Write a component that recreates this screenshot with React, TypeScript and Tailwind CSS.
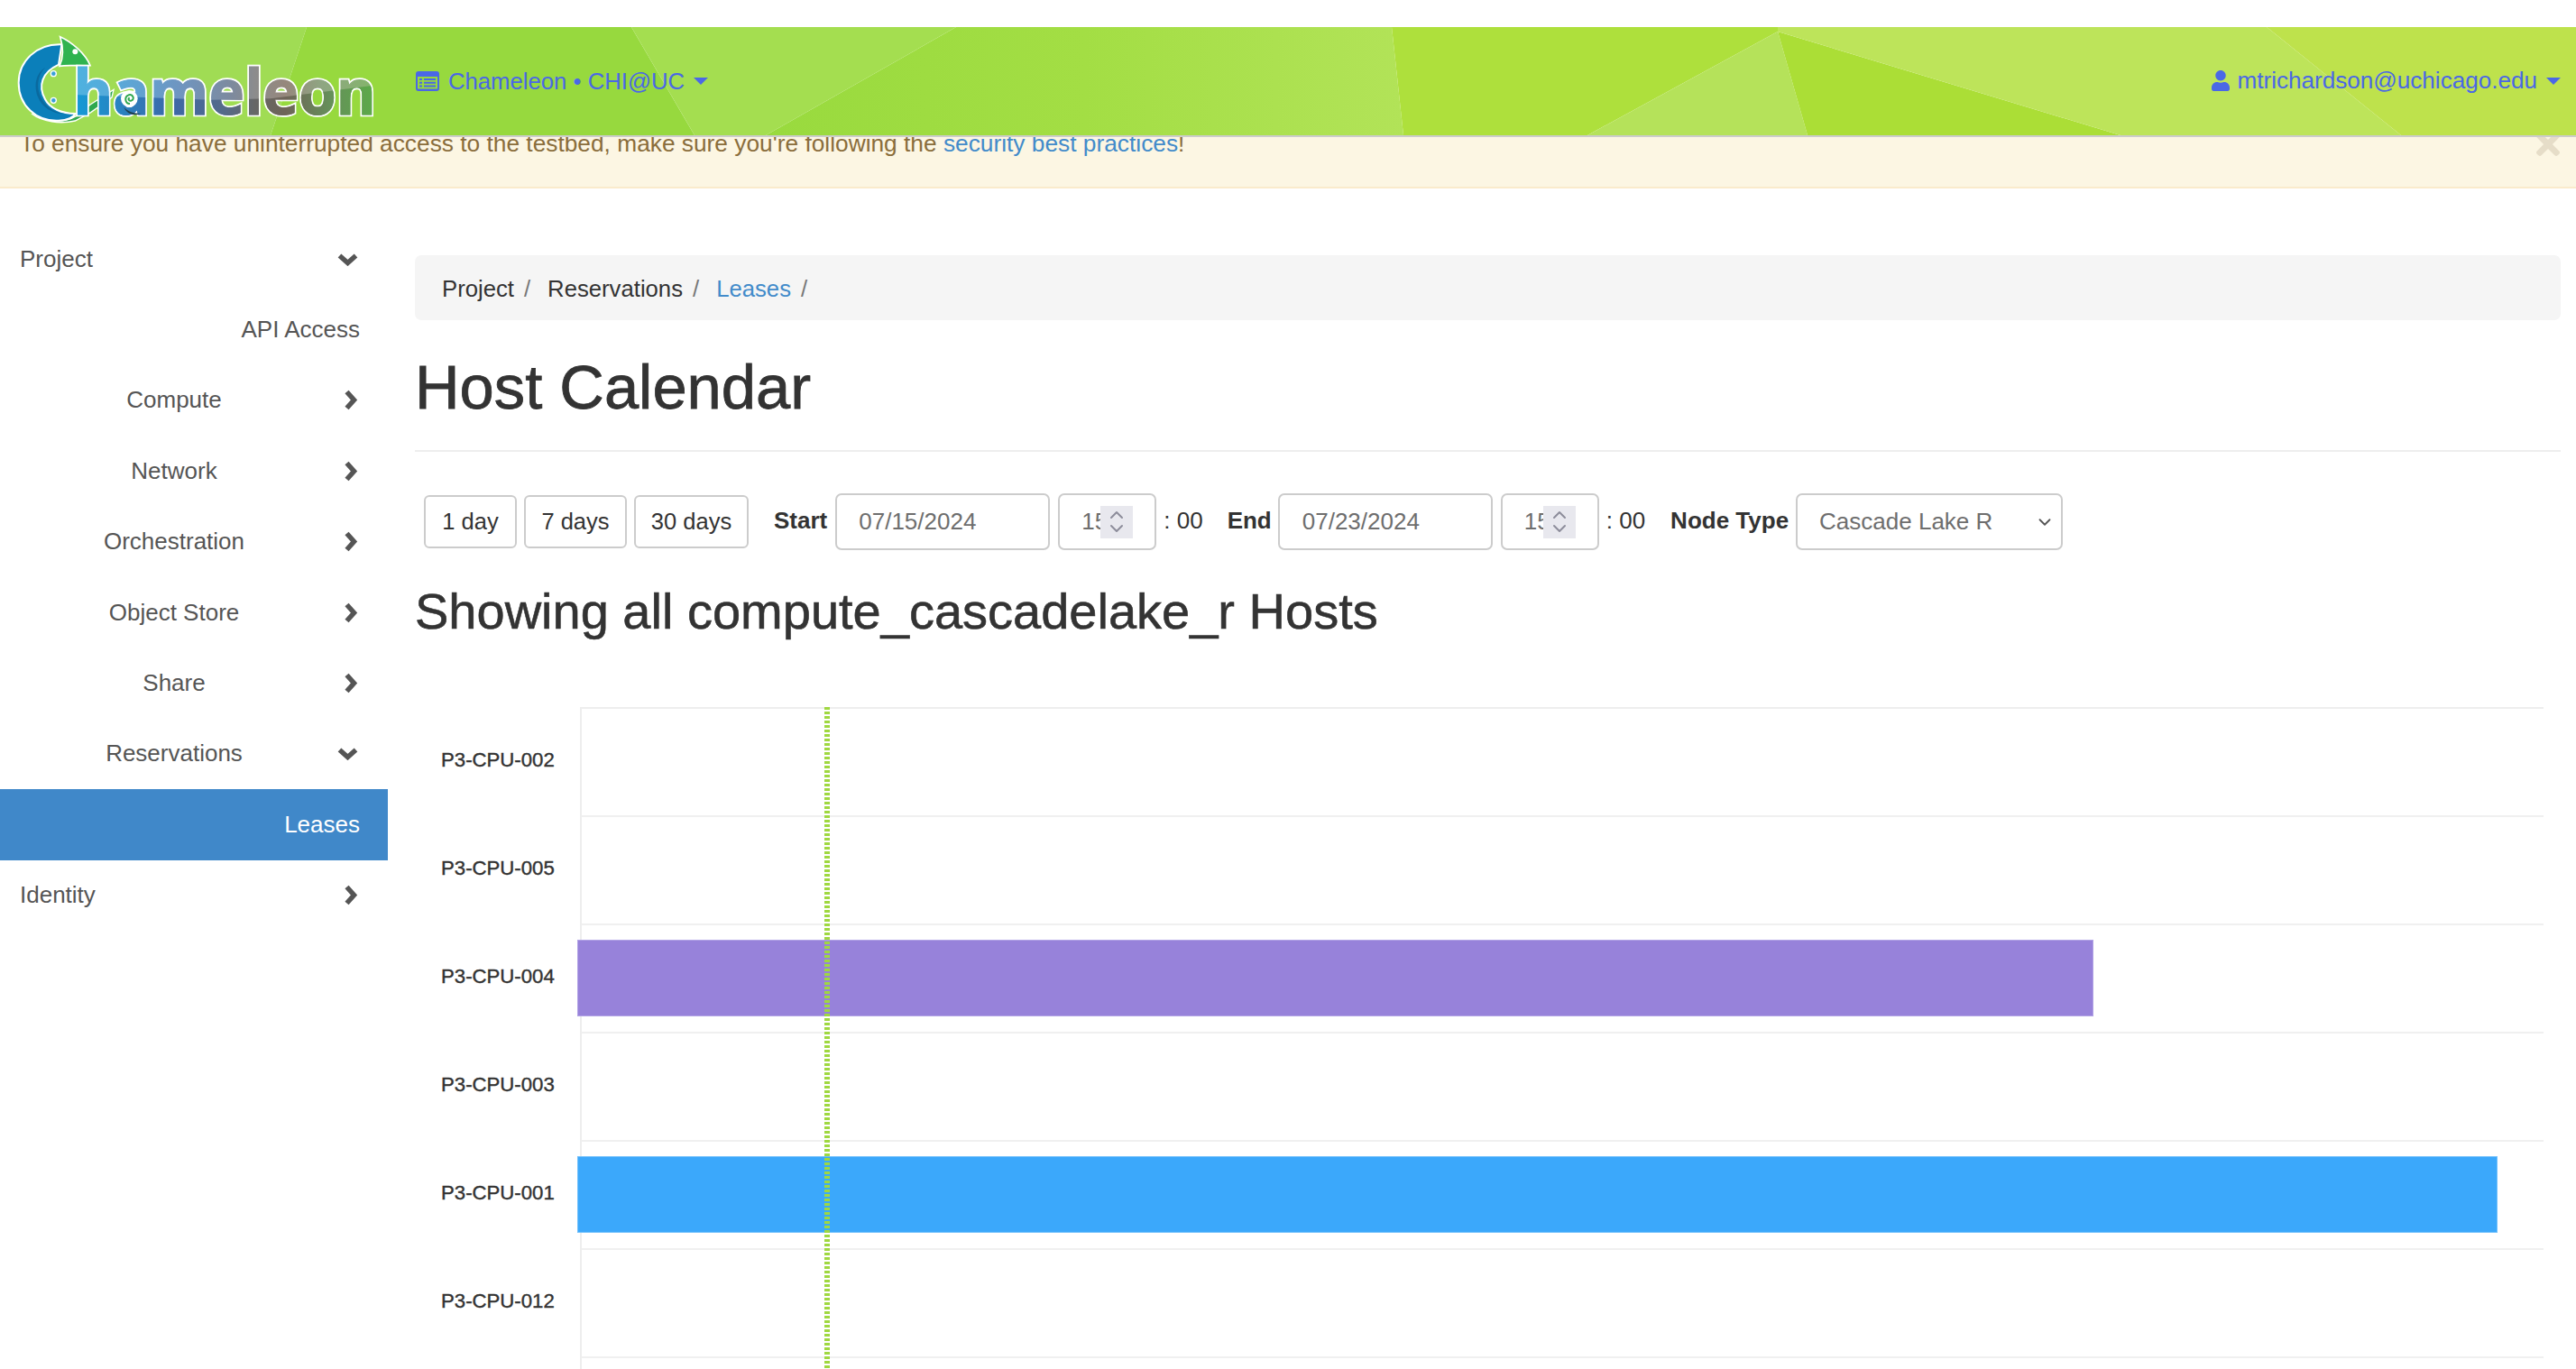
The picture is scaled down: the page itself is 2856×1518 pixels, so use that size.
import React from 'react';
import { FaTimes, FaUser } from 'react-icons/fa';
import { ChevronDown, ChevronUp } from 'lucide-react';

type NavItem = {
  label: string;
  align: 'left' | 'center' | 'right';
  arrow?: 'right' | 'down';
  active?: boolean;
};

const navItems: NavItem[] = [
  { label: 'Project', align: 'left', arrow: 'down' },
  { label: 'API Access', align: 'right' },
  { label: 'Compute', align: 'center', arrow: 'right' },
  { label: 'Network', align: 'center', arrow: 'right' },
  { label: 'Orchestration', align: 'center', arrow: 'right' },
  { label: 'Object Store', align: 'center', arrow: 'right' },
  { label: 'Share', align: 'center', arrow: 'right' },
  { label: 'Reservations', align: 'center', arrow: 'down' },
  { label: 'Leases', align: 'right', active: true },
  { label: 'Identity', align: 'left', arrow: 'right' },
];

const hosts = [
  { name: 'P3-CPU-002' },
  { name: 'P3-CPU-005' },
  { name: 'P3-CPU-004', barClass: 'w-[1681px] bg-[#9782da] border-[#b3a4e6]' },
  { name: 'P3-CPU-003' },
  { name: 'P3-CPU-001', barClass: 'w-[2129px] bg-[#3ba8fb] border-[#74c1fb]' },
  { name: 'P3-CPU-012' },
  { name: 'P3-CPU-011' },
];

const Logo: React.FC = () => (
  <svg viewBox="0 30 1320 360" className="h-[120px] w-[440px] shrink-0">
    <defs>
      <linearGradient id="upper" gradientUnits="userSpaceOnUse" x1="250" y1="0" x2="1250" y2="0">
        <stop offset="0" stopColor="#4db2e0" />
        <stop offset="0.15" stopColor="#5aa8d8" />
        <stop offset="0.35" stopColor="#6f95c0" />
        <stop offset="0.52" stopColor="#7d8a9e" />
        <stop offset="0.6" stopColor="#8c8c8c" />
        <stop offset="0.7" stopColor="#96877c" />
        <stop offset="0.82" stopColor="#8fa682" />
        <stop offset="1" stopColor="#84b56a" />
      </linearGradient>
      <linearGradient id="lower" gradientUnits="userSpaceOnUse" x1="250" y1="0" x2="1250" y2="0">
        <stop offset="0" stopColor="#149ad6" />
        <stop offset="0.15" stopColor="#2a82c0" />
        <stop offset="0.32" stopColor="#3c68a8" />
        <stop offset="0.5" stopColor="#566a88" />
        <stop offset="0.6" stopColor="#666666" />
        <stop offset="0.7" stopColor="#6e6458" />
        <stop offset="0.85" stopColor="#66905a" />
        <stop offset="1" stopColor="#5bab48" />
      </linearGradient>
      <clipPath id="lowerClip">
        <polygon points="240,255 700,272 900,268 1260,222 1260,345 240,345" />
      </clipPath>
    </defs>
    {/* tail behind the letters */}
    <path d="M105 318C140 345 210 352 255 325L300 288L378 238L372 264L302 314L250 342C200 354 140 345 105 318Z" fill="#2fa84f" stroke="#fff" strokeWidth="4" />
    {/* body */}
    <path d="M205 88C120 85 62 145 62 215C62 290 120 345 195 341C225 340 245 330 250 318C205 318 165 300 150 270C125 225 140 180 195 155Z" fill="#0b7fba" stroke="#fff" strokeWidth="6" />
    <path d="M150 165C118 200 118 250 155 290C170 305 190 315 215 318C180 320 140 300 125 260C110 215 125 180 150 165Z" fill="#0a6a9f" />
    <circle cx="178" cy="185" r="9" fill="#3aa0d8" stroke="#fff" strokeWidth="4" />
    <circle cx="178" cy="274" r="9" fill="#3aa0d8" stroke="#fff" strokeWidth="4" />
    {/* head */}
    <path d="M200 62C240 80 285 120 300 158C260 160 225 155 198 160C212 130 212 100 200 62Z" fill="#2fb350" stroke="#fff" strokeWidth="5" />
    <circle cx="250" cy="112" r="9" fill="#fff" />
    {/* word */}
    <text x="244" y="320" textLength="1006" lengthAdjust="spacingAndGlyphs" fontFamily="'Open Sans', sans-serif" fontWeight="700" fontSize="212" fill="#fff" stroke="#fff" strokeWidth="14">
      hameleon
    </text>
    <text x="244" y="320" textLength="1006" lengthAdjust="spacingAndGlyphs" fontFamily="'Open Sans', sans-serif" fontWeight="700" fontSize="212" fill="url(#upper)" stroke="url(#upper)" strokeWidth="3" aria-hidden="true">
      hameleon
    </text>
    <text x="244" y="320" textLength="1006" lengthAdjust="spacingAndGlyphs" fontFamily="'Open Sans', sans-serif" fontWeight="700" fontSize="212" fill="url(#lower)" stroke="url(#lower)" strokeWidth="3" clipPath="url(#lowerClip)" aria-hidden="true">
      hameleon
    </text>
    {/* tail curl in the a */}
    <circle cx="430" cy="268" r="28" fill="#fff" />
    <path d="M432 285C416 285 412 262 428 256C442 252 450 270 436 275C428 277 425 268 431 265" fill="none" stroke="#2fa84f" strokeWidth="6" />
    <path d="M412 296C425 312 445 316 470 318L455 322C435 322 420 315 412 296Z" fill="#1f3f4f" />
  </svg>
);

const NavBackground: React.FC = () => (
  <svg viewBox="0 0 2856 120" preserveAspectRatio="none" className="absolute inset-0 h-full w-full">
    <defs>
      <linearGradient id="bgMiddle" x1="0" y1="0" x2="1" y2="0">
        <stop offset="0" stopColor="#99da3e" />
        <stop offset="0.5" stopColor="#a3de44" />
        <stop offset="1" stopColor="#b2e358" />
      </linearGradient>
    </defs>
    <polygon points="0,0 340,0 300,120 0,120" fill="#a0dc54" />
    <polygon points="340,0 700,0 770,120 300,120" fill="#97d93e" />
    <polygon points="700,0 1060,0 849,120 770,120" fill="#a4de50" />
    <polygon points="1060,0 1543,0 1556,120 849,120" fill="url(#bgMiddle)" />
    <polygon points="1543,0 1971,0 1971,5 1760,120 1556,120" fill="#aee03c" />
    <polygon points="1971,5 2004,120 1760,120" fill="#b5e25a" />
    <polygon points="1971,5 2351,120 2004,120" fill="#abde36" />
    <polygon points="1971,0 2513,0 2662,120 2351,120 1971,5" fill="#bde45a" />
    <polygon points="2513,0 2856,0 2856,120 2662,120" fill="#bee24c" />
  </svg>
);

const ListIcon: React.FC = () => (
  <svg viewBox="0 0 26 22" className="h-[22px] w-[26px] shrink-0" fill="#4a68e6">
    <path
      fillRule="evenodd"
      d="M3 0H23A3 3 0 0 1 26 3V19A3 3 0 0 1 23 22H3A3 3 0 0 1 0 19V3A3 3 0 0 1 3 0ZM2 6V19.500H24V6ZM4 8H7V10H4ZM9 8H22V10H9ZM4 11.700H7V13.700H4ZM9 11.700H22V13.700H9ZM4 15.400H7V17.400H4ZM9 15.400H22V17.400H9Z"
    />
  </svg>
);

const Caret: React.FC = () => (
  <span className="h-0 w-0 border-x-[8px] border-t-[8px] border-x-transparent border-t-[#4a68e6]" />
);

const ArrowDown: React.FC = () => (
  <svg viewBox="0 0 23 15" className="h-[15px] w-[23px]" fill="none" stroke="currentColor" strokeWidth="5.5">
    <path d="M2.500 3.500L11.500 11.500L20.500 3.500" />
  </svg>
);

const ArrowRight: React.FC = () => (
  <svg viewBox="0 0 16 23" className="h-[23px] w-[16px]" fill="none" stroke="currentColor" strokeWidth="5.5">
    <path d="M3.500 2.500L11.500 11.500L3.500 20.500" />
  </svg>
);

const Sidebar: React.FC = () => (
  <aside className="w-[430px] shrink-0 pt-[39px] text-[26px] text-[#555]">
    {navItems.map((item) => (
      <div
        key={item.label}
        className={`flex h-[78.4px] items-center pl-[22px] pr-[31px] ${item.active ? 'bg-[#4088c9] text-white' : ''}`}
      >
        <span
          className={`flex-1 ${item.align === 'left' ? 'text-left' : item.align === 'center' ? 'text-center' : 'text-right'}`}
        >
          {item.label}
        </span>
        {item.arrow && (
          <span className="flex w-[35px] justify-end pr-[2px]">
            {item.arrow === 'down' ? <ArrowDown /> : <ArrowRight />}
          </span>
        )}
      </div>
    ))}
  </aside>
);

const RangeButton: React.FC<{ label: string; width: string }> = ({ label, width }) => (
  <button className={`h-[59px] rounded-[6px] border-2 border-[#ccc] text-[25.5px] text-[#333] ${width}`}>{label}</button>
);

const TimeInput: React.FC<{ width: string }> = ({ width }) => (
  <div className={`flex h-[63px] items-center rounded-[7px] border-2 border-[#ccc] pl-[24px] text-[#6e6e6e] ${width}`}>
    <span className="w-[21px] overflow-hidden">15</span>
    <span className="flex h-[36px] w-[36px] flex-col items-center justify-center bg-[#e8e8ee] text-[#8d8d9b]">
      <ChevronUp className="-mb-[5px] h-[24px] w-[24px] shrink-0" strokeWidth={2} />
      <ChevronDown className="-mt-[4px] h-[24px] w-[24px] shrink-0" strokeWidth={2} />
    </span>
  </div>
);

const Toolbar: React.FC = () => (
  <div className="mt-[46px] ml-[10px] flex items-center text-[26px]">
    <RangeButton label="1 day" width="w-[103px]" />
    <div className="ml-[8px]">
      <RangeButton label="7 days" width="w-[114px]" />
    </div>
    <div className="ml-[8px]">
      <RangeButton label="30 days" width="w-[127px]" />
    </div>
    <b className="mt-[-3px] ml-[28px] text-[#333]">Start</b>
    <div className="ml-[9px] flex h-[63px] w-[238px] items-center rounded-[7px] border-2 border-[#ccc] pl-[24px] text-[#6e6e6e]">
      07/15/2024
    </div>
    <div className="ml-[9px] flex">
      <TimeInput width="w-[109px]" />
    </div>
    <span className="mt-[-3px] ml-[8px] text-[#333]">: 00</span>
    <b className="mt-[-3px] ml-[27px] text-[#333]">End</b>
    <div className="ml-[7px] flex h-[63px] w-[238px] items-center rounded-[7px] border-2 border-[#ccc] pl-[25px] text-[#6e6e6e]">
      07/23/2024
    </div>
    <div className="ml-[9px] flex">
      <TimeInput width="w-[109px]" />
    </div>
    <span className="mt-[-3px] ml-[8px] text-[#333]">: 00</span>
    <b className="mt-[-3px] ml-[28px] text-[#333]">Node Type</b>
    <div className="ml-[8px] flex h-[63px] w-[296px] items-center justify-between rounded-[7px] border-2 border-[#ccc] pr-[7px] pl-[24px] text-[#6e6e6e]">
      Cascade Lake R
      <ChevronDown className="h-[22px] w-[22px] text-[#555]" strokeWidth={2} />
    </div>
  </div>
);

const Chart: React.FC = () => (
  <div className="mt-[76px] flex text-[22.2px] text-[#333]">
    <div className="-mt-[1px] w-[183px] shrink-0 pl-[29px]">
      {hosts.map((host) => (
        <div key={host.name} className="flex h-[120px] items-center [-webkit-text-stroke:0.4px_#333]">
          {host.name}
        </div>
      ))}
    </div>
    <div className="relative mr-[19px] flex-1 border-t-2 border-l-2 border-[#eee]">
      {hosts.map((host) => (
        <div key={host.name} className="flex h-[120px] items-center border-b-2 border-[#f0f0f0] pb-[1px]">
          {host.barClass && <div className={`-ml-[5px] h-[85px] border ${host.barClass}`} />}
        </div>
      ))}
      {/* now marker */}
      <div className="absolute top-[-2px] bottom-0 left-[269px] w-[6px] bg-[repeating-linear-gradient(to_bottom,#9fd840_0,#9fd840_3px,transparent_3px,transparent_5px)]" />
    </div>
  </div>
);

export default function App() {
  return (
    <div className="h-[1518px] w-[2856px] overflow-hidden bg-white pt-[30px] font-['Liberation_Sans',Arial,sans-serif] text-[26px]">
      <header className="relative flex h-[122px] items-center border-b-2 border-[#ccc] pr-[17px] text-[#4a68e6]">
        <NavBackground />
        <div className="relative flex w-full items-center">
          <Logo />
          <div className="ml-[21px] flex items-center">
            <ListIcon />
            <span className="mr-[10px] ml-[10px] text-[25.7px]">Chameleon • CHI@UC</span>
            <Caret />
          </div>
          <div className="ml-auto flex items-center">
            <FaUser className="h-[23px] w-[20px]" />
            <span className="mr-[10px] ml-[8px] text-[26.1px]">mtrichardson@uchicago.edu</span>
            <Caret />
          </div>
        </div>
      </header>

      <div className="h-[57px] overflow-hidden border-b-2 border-[#faebcc] bg-[#fcf6e3] text-[#8a6d3b]">
        <div className="-mt-[11px] flex items-start justify-between pr-[18px] pl-[22px] text-[26.3px] leading-[36px]">
          <span>
            To ensure you have uninterrupted access to the testbed, make sure you're following the{' '}
            <a className="text-[#428bca]">security best practices</a>!
          </span>
          <FaTimes className="h-[38px] w-[26px] text-[#e6ddc8]" />
        </div>
      </div>

      <div className="flex">
        <Sidebar />
        <main className="ml-[30px] min-w-0 flex-1 pt-[74px] pr-[17px]">
          <nav className="flex h-[72px] items-center rounded-[7px] bg-[#f5f5f5] pt-[2px] pl-[30px] text-[25.7px] text-[#333]">
            <span>Project</span>
            <span className="mr-[19px] ml-[11px] text-[#777]">/</span>
            <span>Reservations</span>
            <span className="mr-[19px] ml-[11px] text-[#777]">/</span>
            <a className="text-[#428bca]">Leases</a>
            <span className="ml-[11px] text-[#777]">/</span>
          </nav>

          <h1 className="mt-[38px] border-b-2 border-[#eee] pb-[32px] text-[68.7px] leading-[74px] text-[#333] [-webkit-text-stroke:0.8px_#333]">
            Host Calendar
          </h1>

          <Toolbar />

          <h3 className="mt-[38px] text-[56px] leading-[60px] text-[#333] [-webkit-text-stroke:0.6px_#333]">
            Showing all compute_cascadelake_r Hosts
          </h3>

          <Chart />
        </main>
      </div>
    </div>
  );
}
